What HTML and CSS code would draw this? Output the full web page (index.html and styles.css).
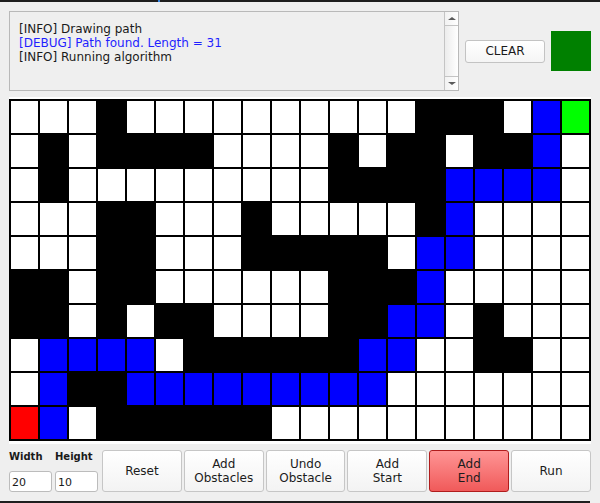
FILE: index.html
```html
<!DOCTYPE html>
<html>
<head>
<meta charset="utf-8">
<link rel="stylesheet" href="styles.css">
</head>
<body>
<div class="topbar"><span class="accent"></span></div>
<div class="header">
  <div class="log">
    <div class="log-text">
      <div>[INFO] Drawing path</div>
      <div class="debug">[DEBUG] Path found. Length = 31</div>
      <div>[INFO] Running algorithm</div>
    </div>
    <div class="scrollbar">
      <div class="arrow up"><span class="tri-up"></span></div>
      <div class="thumb"></div>
      <div class="arrow down"><span class="tri-down"></span></div>
    </div>
  </div>
  <button class="clear">CLEAR</button>
  <div class="swatch"></div>
</div>
<div class="canvas">
  <div class="grid">
    <div class="c"></div><div class="c"></div><div class="c"></div><div class="c k"></div><div class="c"></div><div class="c"></div><div class="c"></div><div class="c"></div><div class="c"></div><div class="c"></div><div class="c"></div><div class="c"></div><div class="c"></div><div class="c"></div><div class="c k"></div><div class="c k"></div><div class="c k"></div><div class="c"></div><div class="c p"></div><div class="c e"></div>
    <div class="c"></div><div class="c k"></div><div class="c"></div><div class="c k"></div><div class="c k"></div><div class="c k"></div><div class="c k"></div><div class="c"></div><div class="c"></div><div class="c"></div><div class="c"></div><div class="c k"></div><div class="c"></div><div class="c k"></div><div class="c k"></div><div class="c"></div><div class="c k"></div><div class="c k"></div><div class="c p"></div><div class="c"></div>
    <div class="c"></div><div class="c k"></div><div class="c"></div><div class="c"></div><div class="c"></div><div class="c"></div><div class="c"></div><div class="c"></div><div class="c"></div><div class="c"></div><div class="c"></div><div class="c k"></div><div class="c k"></div><div class="c k"></div><div class="c k"></div><div class="c p"></div><div class="c p"></div><div class="c p"></div><div class="c p"></div><div class="c"></div>
    <div class="c"></div><div class="c"></div><div class="c"></div><div class="c k"></div><div class="c k"></div><div class="c"></div><div class="c"></div><div class="c"></div><div class="c k"></div><div class="c"></div><div class="c"></div><div class="c"></div><div class="c"></div><div class="c"></div><div class="c k"></div><div class="c p"></div><div class="c"></div><div class="c"></div><div class="c"></div><div class="c"></div>
    <div class="c"></div><div class="c"></div><div class="c"></div><div class="c k"></div><div class="c k"></div><div class="c"></div><div class="c"></div><div class="c"></div><div class="c k"></div><div class="c k"></div><div class="c k"></div><div class="c k"></div><div class="c k"></div><div class="c"></div><div class="c p"></div><div class="c p"></div><div class="c"></div><div class="c"></div><div class="c"></div><div class="c"></div>
    <div class="c k"></div><div class="c k"></div><div class="c"></div><div class="c k"></div><div class="c k"></div><div class="c"></div><div class="c"></div><div class="c"></div><div class="c"></div><div class="c"></div><div class="c"></div><div class="c k"></div><div class="c k"></div><div class="c k"></div><div class="c p"></div><div class="c"></div><div class="c"></div><div class="c"></div><div class="c"></div><div class="c"></div>
    <div class="c k"></div><div class="c k"></div><div class="c"></div><div class="c k"></div><div class="c"></div><div class="c k"></div><div class="c k"></div><div class="c"></div><div class="c"></div><div class="c"></div><div class="c"></div><div class="c k"></div><div class="c k"></div><div class="c p"></div><div class="c p"></div><div class="c"></div><div class="c k"></div><div class="c"></div><div class="c"></div><div class="c"></div>
    <div class="c"></div><div class="c p"></div><div class="c p"></div><div class="c p"></div><div class="c p"></div><div class="c"></div><div class="c k"></div><div class="c k"></div><div class="c k"></div><div class="c k"></div><div class="c k"></div><div class="c k"></div><div class="c p"></div><div class="c p"></div><div class="c"></div><div class="c"></div><div class="c k"></div><div class="c k"></div><div class="c"></div><div class="c"></div>
    <div class="c"></div><div class="c p"></div><div class="c k"></div><div class="c k"></div><div class="c p"></div><div class="c p"></div><div class="c p"></div><div class="c p"></div><div class="c p"></div><div class="c p"></div><div class="c p"></div><div class="c p"></div><div class="c p"></div><div class="c"></div><div class="c"></div><div class="c"></div><div class="c"></div><div class="c"></div><div class="c"></div><div class="c"></div>
    <div class="c s"></div><div class="c p"></div><div class="c"></div><div class="c k"></div><div class="c k"></div><div class="c k"></div><div class="c k"></div><div class="c k"></div><div class="c k"></div><div class="c"></div><div class="c"></div><div class="c"></div><div class="c"></div><div class="c"></div><div class="c"></div><div class="c"></div><div class="c"></div><div class="c"></div><div class="c"></div><div class="c"></div>
  </div>
</div>
<div class="controls">
  <div class="dims">
    <div class="label">Width</div>
    <div class="label">Height</div>
    <input class="entry" type="text" value="20">
    <input class="entry" type="text" value="10">
  </div>
  <div class="buttons">
    <button class="btn">Reset</button>
    <button class="btn">Add<br>Obstacles</button>
    <button class="btn">Undo<br>Obstacle</button>
    <button class="btn">Add<br>Start</button>
    <button class="btn danger">Add<br>End</button>
    <button class="btn">Run</button>
  </div>
</div>
<div class="bottombar"></div>
</body>
</html>
```
FILE: styles.css
```css
html, body {
  margin: 0;
  padding: 0;
}
body {
  background: #efefef;
  font-family: "DejaVu Sans", sans-serif;
  width: 600px;
  height: 503px;
  overflow: hidden;
}
.topbar {
  height: 2px;
  background: #1e1e1e;
  display: flex;
}
.topbar .accent {
  margin-left: 158px;
  width: 2px;
  background: #3584e4;
}
.header {
  display: flex;
  align-items: center;
  height: 80px;
  margin: 9px 0 0 9px;
}
.log {
  box-sizing: border-box;
  width: 450px;
  height: 80px;
  border: 1px solid #b9b9b9;
  display: flex;
  background: #efefef;
}
.log-text {
  flex: 1;
  padding: 10px 0 0 9px;
  font-size: 12px;
  line-height: 14px;
  color: #1a1a1a;
}
.debug {
  color: #1f1fff;
}
.scrollbar {
  width: 13px;
  border-left: 1px solid #c4c4c4;
  display: flex;
  flex-direction: column;
}
.arrow {
  height: 13px;
  display: flex;
  align-items: center;
  justify-content: center;
  background: linear-gradient(to right, #f2f2f2, #ffffff);
}
.arrow.up {
  border-bottom: 1px solid #c4c4c4;
}
.arrow.down {
  border-top: 1px solid #c4c4c4;
}
.tri-up {
  width: 0;
  height: 0;
  border-left: 4px solid transparent;
  border-right: 4px solid transparent;
  border-bottom: 3px solid #5a5a5a;
}
.tri-down {
  width: 0;
  height: 0;
  border-left: 4px solid transparent;
  border-right: 4px solid transparent;
  border-top: 3px solid #5a5a5a;
}
.thumb {
  flex: 1;
  background: linear-gradient(to right, #ececec, #ffffff);
}
.clear {
  margin: 0 0 0 6px;
  width: 80px;
  height: 23px;
  box-sizing: border-box;
  border: 1px solid #c3c3c3;
  border-radius: 3px;
  background: linear-gradient(#ffffff, #f5f5f5);
  font: 12px "DejaVu Sans", sans-serif;
  color: #1a1a1a;
  padding: 0;
}
.swatch {
  margin-left: 6px;
  width: 40px;
  height: 40px;
  background: #008000;
}
.canvas {
  margin: 6px 0 0 9px;
  width: 582px;
  height: 347px;
  box-sizing: border-box;
  padding-top: 2px;
  background: #ffffff;
}
.grid {
  display: grid;
  grid-template-columns: repeat(20, 27px);
  grid-template-rows: repeat(10, 32px);
  gap: 2px;
  padding: 2px;
  background: #000000;
  width: max-content;
}
.c { background: #ffffff; }
.c.k { background: #000000; }
.c.p { background: #0000ff; }
.c.s { background: #ff0000; }
.c.e { background: #00ff00; }
.controls {
  display: flex;
  margin: 6px 0 0 9px;
  height: 42px;
}
.dims {
  display: grid;
  grid-template-columns: 43px 43px;
  grid-template-rows: 12px 21px;
  column-gap: 3px;
  row-gap: 8px;
  width: 89px;
  padding-top: 1px;
}
.label {
  font-size: 10px;
  font-weight: bold;
  line-height: 12px;
  color: #1a1a1a;
}
.entry {
  box-sizing: border-box;
  width: 43px;
  height: 21px;
  margin: 0;
  border: 1px solid #bcbcbc;
  border-radius: 3px;
  background: #ffffff;
  padding: 2px 0 0 2px;
  font: 11px "DejaVu Sans", sans-serif;
  color: #1a1a1a;
}
.buttons {
  display: flex;
  gap: 2px;
  margin-left: 4px;
  width: 489px;
}
.btn {
  flex: 1;
  height: 42px;
  margin: 0;
  padding: 0;
  box-sizing: border-box;
  border: 1px solid #c6c6c6;
  border-radius: 3px;
  background: linear-gradient(#ffffff, #f3f3f3);
  font: 12px/14px "DejaVu Sans", sans-serif;
  color: #1c1c1c;
}
.btn.danger {
  background: linear-gradient(#ff9595, #f05a5a);
  border-color: #b01c1c;
}
.bottombar {
  margin-top: 9px;
  height: 2px;
  width: 590px;
  background: #1e1e1e;
}
```
